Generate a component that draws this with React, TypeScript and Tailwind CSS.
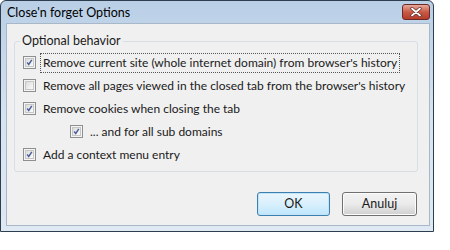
import React from "react";

type Opt = { label: string; checked: boolean; indent?: boolean; focused?: boolean };

const options: Opt[] = [
  { label: "Remove current site (whole internet domain) from browser's history", checked: true, focused: true },
  { label: "Remove all pages viewed in the closed tab from the browser's history", checked: false },
  { label: "Remove cookies when closing the tab", checked: true },
  { label: "... and for all sub domains", checked: true, indent: true },
  { label: "Add a context menu entry", checked: true },
];

function CheckBox({ checked }: { checked: boolean }) {
  return (
    <div className="w-[13px] h-[13px] shrink-0 border border-[#8e8f8f] bg-[#f4f4f4] p-[1px]">
      <div className="w-full h-full border border-[#c6c6c6] bg-gradient-to-br from-[#dcdcdc] to-[#fbfbfb] flex items-center justify-center">
        {checked && (
          <svg width="9" height="9" viewBox="0 0 9 9">
            <path d="M1.5 4.5 L3.5 7 L7.5 1" fill="none" stroke="#4a5f97" strokeWidth="1.8" />
          </svg>
        )}
      </div>
    </div>
  );
}

export default function App() {
  return (
    <div
      className="w-[450px] h-[250px] bg-white overflow-hidden text-[12px] text-[#1a1a1a]"
      style={{ fontFamily: 'Lato, "Noto Sans", sans-serif' }}
    >
      <div className="w-[434px] h-[232px] border border-[#2f3e4f] rounded-t-[6px] bg-gradient-to-b from-[#b9cfe6] via-[#d6e3f1] to-[#dfe9f4] flex flex-col">
        {/* Title bar */}
        <div className="h-[22px] flex items-start justify-between pl-[6px] pr-[3px]">
          <span className="mt-[3px] text-[12.5px] text-black whitespace-nowrap">Close'n forget Options</span>
          <div className="mt-[3px] w-[28px] h-[16px] rounded-[3px] border border-[#6b2a24] bg-gradient-to-b from-[#e8a89c] via-[#c75a46] to-[#b63b2a] flex items-center justify-center">
            <svg width="12" height="10" viewBox="0 0 12 10">
              <path d="M2 1.5 L10 8.5 M10 1.5 L2 8.5" stroke="#5a2a25" strokeWidth="3.2" strokeLinecap="round" />
              <path d="M2 1.5 L10 8.5 M10 1.5 L2 8.5" stroke="#ffffff" strokeWidth="1.8" strokeLinecap="round" />
            </svg>
          </div>
        </div>

        {/* Client area */}
        <div className="flex-1 ml-[5px] mr-[3px] mb-[5px] border border-[#a9b8c8] bg-[#f0f0f0] flex flex-col">
          {/* Group box */}
          <div className="relative mt-[17px] ml-[7px] mr-[11px] h-[131px] border border-[#d5dfe5] rounded-[3px]">
            <span className="absolute left-[5px] top-[-9px] px-[2px] bg-[#f0f0f0] text-[12.5px] leading-[16px] whitespace-nowrap">Optional behavior</span>
            <div className="flex flex-col pt-[9px] pl-[8px]">
              {options.map((o) => (
                <div key={o.label} className={`h-[23px] flex items-center ${o.indent ? "pl-[47px]" : ""}`}>
                  <CheckBox checked={o.checked} />
                  <span
                    className={`ml-[4px] px-[2px] leading-[18px] whitespace-nowrap border ${
                      o.focused ? "border-dotted border-[#555]" : "border-transparent"
                    }`}
                  >
                    {o.label}
                  </span>
                </div>
              ))}
            </div>
          </div>

          {/* Buttons */}
          <div className="flex justify-end gap-[12px] mt-[20px] mr-[12px]">
            <button className="w-[73px] h-[24px] rounded-[3px] border border-[#3c7fb1] bg-gradient-to-b from-[#eaf6fd] via-[#d9f0fc] to-[#bee6fd] shadow-[inset_0_0_0_1px_#c2e4f6] text-[12.5px]">
              OK
            </button>
            <button className="w-[75px] h-[24px] rounded-[3px] border border-[#707070] bg-gradient-to-b from-[#f2f2f2] via-[#ebebeb] to-[#cfcfcf] shadow-[inset_0_0_0_1px_#fcfcfc] text-[12.5px]">
              Anuluj
            </button>
          </div>
        </div>
      </div>
    </div>
  );
}
